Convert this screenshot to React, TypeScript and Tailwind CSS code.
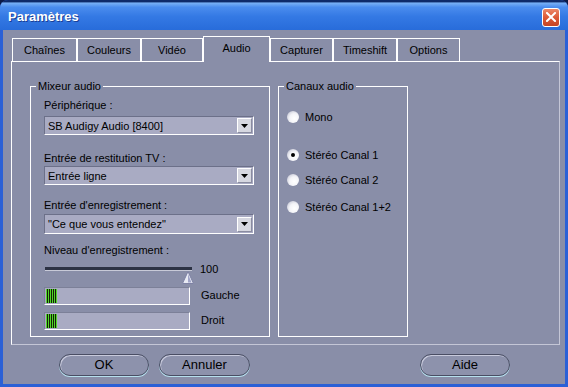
import React from 'react';

const tabs = [
  { label: 'Chaînes', w: 'w-[65px]' },
  { label: 'Couleurs', w: 'w-[64px]' },
  { label: 'Vidéo', w: 'w-[62px]' },
  { label: 'Audio', w: 'w-[67px]', active: true },
  { label: 'Capturer', w: 'w-[63px]' },
  { label: 'Timeshift', w: 'w-[64px]' },
  { label: 'Options', w: 'w-[63px]' },
];

const Combo: React.FC<{ value: string; className?: string }> = ({ value, className }) => (
  <div
    className={`flex w-[210px] items-center justify-between border border-t-[#6c7089] border-l-[#6c7089] border-r-white border-b-white bg-[#a9abc3] pl-[3px] pr-[1px] ${className ?? ''}`}
  >
    <span className="leading-[14px]">{value}</span>
    <div className="flex h-[15px] w-[15px] items-center justify-center border border-t-white border-l-white border-r-[#8a8ca0] border-b-[#8a8ca0] bg-[#d6d7e0]">
      <svg width="7" height="4" viewBox="0 0 7 4">
        <path d="M0 0h7L3.5 4z" fill="#000" />
      </svg>
    </div>
  </div>
);

const Meter: React.FC<{ label: string; className?: string }> = ({ label, className }) => (
  <div className={`flex items-start ${className ?? ''}`}>
    <div className="h-[18px] w-[146px] border border-t-[#7c8098] border-l-[#7c8098] border-r-white border-b-white bg-[#a9abc3] p-[1px]">
      <div className="h-full w-[11px] bg-[repeating-linear-gradient(90deg,#50d828_0px,#50d828_1px,#142008_1px,#142008_2px)] border-r border-[#50d828]" />
    </div>
    <span className="ml-[11px] mt-[1px] leading-[14px]">{label}</span>
  </div>
);

const Radio: React.FC<{ label: string; checked?: boolean; className?: string }> = ({ label, checked, className }) => (
  <div className={`flex items-center leading-[14px] ${className ?? ''}`}>
    <div className="flex h-[12px] w-[12px] items-center justify-center rounded-full bg-[radial-gradient(circle_at_62%_62%,#ffffff_0%,#f4f4f8_45%,#b4b6c8_100%)]">
      {checked && <div className="h-[4px] w-[4px] rounded-full bg-black" />}
    </div>
    <span className="ml-[6px]">{label}</span>
  </div>
);

const Button: React.FC<{ label: string; className?: string }> = ({ label, className }) => (
  <div
    className={`flex h-[22px] items-center justify-center rounded-full border border-[#4a4e64] bg-[#8d92ac] text-[13px] shadow-[inset_1px_1px_0_#c8cadc,0_1px_0_#b6e0ee] ${className ?? ''}`}
  >
    {label}
  </div>
);

export default function App() {
  return (
    <div className="h-[387px] w-[568px] overflow-hidden bg-[#0c1a48] font-['Liberation_Sans',Arial,sans-serif] text-[11px] text-black">
      <div className="flex h-full flex-col rounded-t-[8px] bg-[#2b60d6] px-[3px] pb-[3px]">
        {/* title bar */}
        <div className="-mx-[3px] flex h-[30px] shrink-0 items-center justify-between rounded-t-[8px] bg-[linear-gradient(180deg,#0e2a6a_0%,#0e2a6a_6%,#78b0f6_10%,#4a8cee_24%,#3479e4_55%,#286cda_100%)] pl-[8px] pr-[8px] pt-[4px]">
          <span className="text-[13px] font-bold text-white [text-shadow:1px_1px_0_#1a3f96]">Paramètres</span>
          <div className="flex h-[19px] w-[18px] items-center justify-center rounded-[3px] border border-white bg-[linear-gradient(180deg,#ec8868_0%,#dc5a38_50%,#c44424_100%)]">
            <svg width="10" height="10" viewBox="0 0 10 10">
              <path d="M1 1L9 9M9 1L1 9" stroke="#fff" strokeWidth="2" strokeLinecap="square" />
            </svg>
          </div>
        </div>

        {/* body */}
        <div className="flex flex-1 flex-col bg-[#898ea8]">
          {/* tabs */}
          <div className="relative z-10 ml-[9px] mt-[6px] flex h-[25px] items-end">
            {tabs.map((t) => (
              <div
                key={t.label}
                className={`flex ${t.w} items-center justify-center border border-b-0 border-white ${
                  t.active ? 'relative -mb-px h-[26px] bg-[#898ea8] pb-[3px]' : 'h-[23px] pt-[1px]'
                }`}
              >
                {t.label}
              </div>
            ))}
          </div>

          {/* panel */}
          <div className="ml-[8px] flex h-[284px] w-[549px] gap-[8px] border border-t-white border-l-white border-r-[#c4c6d6] border-b-[#c4c6d6] pl-[18px] pt-[17px]">
            <fieldset className="h-[258px] w-[240px] border border-white">
              <legend className="ml-[5px] px-[2px] leading-[14px]">Mixeur audio</legend>
              <div className="flex flex-col pl-[13px]">
                <span className="mt-[5px] leading-[14px]">Périphérique :</span>
                <Combo value="SB Audigy Audio [8400]" className="mt-[4px] h-[19px]" />
                <span className="mt-[16px] leading-[14px]">Entrée de restitution TV :</span>
                <Combo value="Entrée ligne" className="mt-[1px] h-[19px]" />
                <span className="mt-[13px] leading-[14px]">Entrée d'enregistrement :</span>
                <Combo value={'"Ce que vous entendez"'} className="mt-[2px] h-[20px]" />
                <span className="mt-[9px] leading-[14px]">Niveau d'enregistrement :</span>
                <div className="mt-[5px] flex items-start">
                  <svg width="150" height="22" viewBox="0 0 150 22">
                    <rect x="1" y="5" width="147" height="3" fill="#2c3244" />
                    <rect x="1" y="8" width="147" height="1" fill="#c8cad8" />
                    <path d="M144 9.5L149.5 21.5H138.5Z" fill="#e8eaf4" stroke="#7e82a4" strokeWidth="1" />
                    <path d="M144 12L147.5 20.5H144Z" fill="#a0a4c8" />
                  </svg>
                  <span className="ml-[6px] leading-[14px]">100</span>
                </div>
                <Meter label="Gauche" className="mt-[3px]" />
                <Meter label="Droit" className="mt-[7px]" />
              </div>
            </fieldset>

            <fieldset className="h-[258px] w-[130px] border border-white">
              <legend className="ml-[5px] px-[2px] leading-[14px]">Canaux audio</legend>
              <div className="flex flex-col pl-[8px]">
                <Radio label="Mono" className="mt-[17px]" />
                <Radio label="Stéréo Canal 1" checked className="mt-[24px]" />
                <Radio label="Stéréo Canal 2" className="mt-[11px]" />
                <Radio label="Stéréo Canal 1+2" className="mt-[13px]" />
              </div>
            </fieldset>
          </div>

          {/* buttons */}
          <div className="mt-[9px] flex">
            <Button label="OK" className="ml-[56px] w-[90px]" />
            <Button label="Annuler" className="ml-[10px] w-[91px]" />
            <Button label="Aide" className="ml-[170px] w-[90px]" />
          </div>
        </div>
      </div>
    </div>
  );
}
